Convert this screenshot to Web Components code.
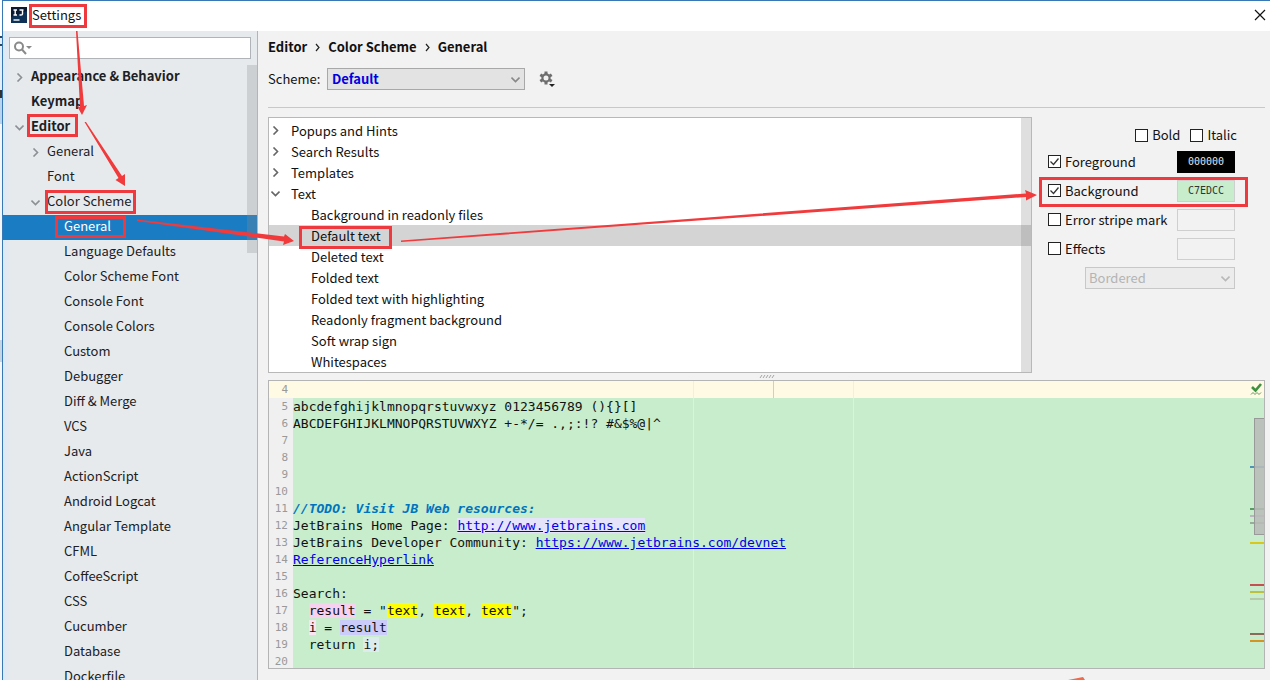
<!DOCTYPE html>
<html lang="en">
<head>
<meta charset="utf-8">
<title>Settings</title>
<style>
  html, body { height: 100%; }
  body {
    margin: 0;
    overflow: hidden;
    background: #f2f2f2;
    color: #111;
    font: 13px/20px "Noto Sans CJK SC", "Noto Sans", sans-serif;
  }
  .attributes { display: flex; gap: 8px; }
</style>
</head>
<body>
<settings-window>
  <title-bar slot="title">Settings</title-bar>
  <side-panel slot="side">
    <tree-row state="closed" strong>Appearance &amp; Behavior</tree-row>
    <tree-row strong>Keymap</tree-row>
    <tree-row state="open" strong>Editor</tree-row>
    <tree-row level="1" state="closed">General</tree-row>
    <tree-row level="1">Font</tree-row>
    <tree-row level="1" state="open">Color Scheme</tree-row>
    <tree-row level="2" selected>General</tree-row>
    <tree-row level="2">Language Defaults</tree-row>
    <tree-row level="2">Color Scheme Font</tree-row>
    <tree-row level="2">Console Font</tree-row>
    <tree-row level="2">Console Colors</tree-row>
    <tree-row level="2">Custom</tree-row>
    <tree-row level="2">Debugger</tree-row>
    <tree-row level="2">Diff &amp; Merge</tree-row>
    <tree-row level="2">VCS</tree-row>
    <tree-row level="2">Java</tree-row>
    <tree-row level="2">ActionScript</tree-row>
    <tree-row level="2">Android Logcat</tree-row>
    <tree-row level="2">Angular Template</tree-row>
    <tree-row level="2">CFML</tree-row>
    <tree-row level="2">CoffeeScript</tree-row>
    <tree-row level="2">CSS</tree-row>
    <tree-row level="2">Cucumber</tree-row>
    <tree-row level="2">Database</tree-row>
    <tree-row level="2">Dockerfile</tree-row>
  </side-panel>
  <scheme-header></scheme-header>
  <div class="attributes">
    <option-list>
      <option-row state="closed">Popups and Hints</option-row>
      <option-row state="closed">Search Results</option-row>
      <option-row state="closed">Templates</option-row>
      <option-row state="open">Text</option-row>
      <option-row nested>Background in readonly files</option-row>
      <option-row nested selected>Default text</option-row>
      <option-row nested>Deleted text</option-row>
      <option-row nested>Folded text</option-row>
      <option-row nested>Folded text with highlighting</option-row>
      <option-row nested>Readonly fragment background</option-row>
      <option-row nested>Soft wrap sign</option-row>
      <option-row nested>Whitespaces</option-row>
    </option-list>
    <attribute-panel></attribute-panel>
  </div>
  <split-grip></split-grip>
  <code-preview></code-preview>
  <callout-layer slot="overlay"></callout-layer>
</settings-window>

<script>
const chevron = (dir, size = 9) => `
  <svg width="${size}" height="${size}" viewBox="0 0 9 9" fill="none" stroke="currentColor" stroke-width="1.6" aria-hidden="true">
    <path d="${dir === 'open' ? 'M0.5 2.5 L4.5 6.5 L8.5 2.5' : 'M2.5 0.5 L6.5 4.5 L2.5 8.5'}"/>
  </svg>`;

function define(name, render) {
  customElements.define(name, class extends HTMLElement {
    connectedCallback() {
      this.attachShadow({ mode: 'open' });
      this.shadowRoot.innerHTML = render(this);
    }
  });
}

define('settings-window', () => `
  <style>
    :host {
      display: grid;
      grid-template-columns: 2px 256px minmax(0, 1fr);
      grid-template-rows: 31px minmax(0, 1fr);
      height: 100vh;
      position: relative;
      overflow: hidden;
    }
    .edge {
      grid-row: 1 / 3;
      background: linear-gradient(#fff 36px, #29485f 36px 38px, #e4eef8 38px 44px, #29485f 44px 46px, #e4eef8 46px 90px, #333 90px 98px, #b9d4ee 98px 124px, #f4f6f8 124px 340px, #c5d5e4 340px 362px, #f4f6f8 362px);
    }
    .side { border-right: 1px solid #b4b4b4; border-left: 1px solid #3878b4; overflow: hidden; }
    .title { grid-column: 2 / 4; border-left: 1px solid #3878b4; border-top: 1px solid #3878b4; background: #fff; }
    main {
      display: flex;
      flex-direction: column;
      min-height: 0;
      padding: 0 5px 11px 10px;
    }
  </style>
  <div class="edge"></div>
  <div class="title"><slot name="title"></slot></div>
  <div class="side"><slot name="side"></slot></div>
  <main><slot></slot></main>
  <slot name="overlay"></slot>
`);

define('title-bar', () => `
  <style>
    :host { display: flex; align-items: center; height: 28px; padding: 0 4px 0 8px; }
    h1 { flex: 1; margin: 0 0 0 5px; font: inherit; }
    svg { display: block; }
    button { padding: 0; border: 0; background: none; width: 12px; height: 12px; color: #111; }
  </style>
  <svg width="16" height="16" viewBox="0 0 16 16" aria-hidden="true">
    <rect width="16" height="16" fill="#0b1a33"/>
    <path d="M0 10 L16 4 V16 H0Z" fill="#0d3157"/>
    <path d="M2.5 3 H6 M4.2 3 V8 M2.5 8 H6 M8.5 3 H12.5 M11.5 3 V7 Q11.5 8 10 8 H8.5" stroke="#fff" stroke-width="1.4" fill="none"/>
    <path d="M2.5 13 H8.5" stroke="#fff" stroke-width="1.4"/>
  </svg>
  <h1><slot></slot></h1>
  <button aria-label="Close">
    <svg width="12" height="12" viewBox="0 0 12 12" stroke="currentColor" stroke-width="1.2"><path d="M1 1 L11 11 M11 1 L1 11"/></svg>
  </button>
`);

define('side-panel', () => `
  <style>
    :host { display: block; height: 100%; background: linear-gradient(90deg, #dce9f6, #e6eaed 8px); overflow: hidden; }
    .search {
      display: flex;
      align-items: center;
      gap: 2px;
      height: 20px;
      margin: 6px;
      padding-left: 4px;
      border: 1px solid #b0b4b8;
      background: #fff;
    }
    input { flex: 1; min-width: 0; height: 18px; padding: 0; border: 0; outline: 0; background: none; font: inherit; }
    .body { position: relative; }
    .thumb { position: absolute; top: 0; right: 0; width: 10px; height: 188px; background: rgba(140, 140, 140, .28); }
  </style>
  <label class="search">
    <svg width="20" height="16" viewBox="0 0 20 16" fill="none" stroke="#8a8a8a" stroke-width="2" aria-label="Search">
      <circle cx="5" cy="6.5" r="4"/><path d="M8 9.5 L12 14"/><path d="M12 6 H18 L15 9Z" fill="#8a8a8a" stroke="none"/>
    </svg>
    <input type="text" aria-label="Search settings">
  </label>
  <div class="body" role="tree"><slot></slot><div class="thumb"></div></div>
`);

define('tree-row', el => `
  <style>
    :host { display: flex; align-items: center; height: 25px; padding-left: 12px; color: #1c2024; }
    :host([level="1"]) { padding-left: 28px; }
    :host([level="2"]) { padding-left: 45px; }
    :host([selected]) { background: #1a7dc4; color: #fff; }
    :host([strong]) { font-weight: bold; }
    i { display: flex; width: 16px; color: #8c9094; }
    span { padding-bottom: 3px; }
  </style>
  <i>${el.hasAttribute('state') ? chevron(el.getAttribute('state')) : ''}</i>
  <span role="treeitem"><slot></slot></span>
`);

define('scheme-header', () => `
  <style>
    :host { display: block; border-bottom: 1px solid #c8c8c8; margin-bottom: 9px; height: 76px; }
    nav { display: flex; gap: 8px; align-items: center; height: 32px; font-weight: bold; color: #111; }
    .line { display: flex; align-items: center; height: 32px; }
    label { width: 59px; }
    .combo { display: grid; align-items: center; width: 198px; }
    .combo > * { grid-area: 1 / 1; }
    select {
      appearance: none;
      height: 22px;
      padding: 0 4px;
      border: 1px solid #a8a8a8;
      border-radius: 0;
      background: #e3e3e3;
      color: #0000e0;
      font: inherit;
      font-weight: bold;
    }
    .combo svg { justify-self: end; margin-right: 5px; color: #888; pointer-events: none; }
    button { margin-left: 13px; padding: 0; border: 0; background: none; height: 18px; }
  </style>
  <nav aria-label="Breadcrumb">
    <span>Editor</span><svg width="5" height="9" viewBox="0 0 5 9" fill="none" stroke="#222" stroke-width="1.2"><path d="M1 1 L4 4.5 L1 8"/></svg>
    <span>Color Scheme</span><svg width="5" height="9" viewBox="0 0 5 9" fill="none" stroke="#222" stroke-width="1.2"><path d="M1 1 L4 4.5 L1 8"/></svg>
    <span>General</span>
  </nav>
  <div class="line">
    <label for="scheme">Scheme:</label>
    <div class="combo">
      <select id="scheme"><option>Default</option></select>
      ${chevron('open')}
    </div>
    <button aria-label="Scheme actions">
      <svg width="18" height="18" viewBox="0 0 18 18">
        <g transform="translate(8 8)" fill="none" stroke="#6e6e6e">
          <circle r="3.6" stroke-width="2.2"/>
          <path d="M0 -6.5 V-4 M0 4 V6.5 M-5.7 -3.3 L-3.6 -2 M5.7 -3.3 L3.6 -2 M-5.7 3.3 L-3.6 2 M5.7 3.3 L3.6 2" stroke-width="3"/>
        </g>
        <path d="M11 14 H17 L14 17Z" fill="#222"/>
      </svg>
    </button>
  </div>
`);

define('option-list', () => `
  <style>
    :host { display: flex; flex: 1; min-width: 0; border: 1px solid #b8b8b8; background: #fff; height: 254px; overflow: hidden; }
    .rows { flex: 1; padding-top: 2px; margin-right: -10px; }
    .track { width: 10px; background: rgba(120, 120, 120, .24); }
  </style>
  <div class="rows" role="tree"><slot></slot></div>
  <div class="track"></div>
`);

define('option-row', el => `
  <style>
    :host { display: flex; align-items: center; height: 21px; padding-left: 2px; margin-top: 0; }
    :host([nested]) { padding-left: 22px; }
    :host([selected]) { background: #d4d4d4; }
    i { display: flex; width: 20px; color: #666; }
  </style>
  <i>${el.hasAttribute('state') ? chevron(el.getAttribute('state')) : ''}</i>
  <span role="treeitem"><slot></slot></span>
`);

define('attribute-panel', () => `
  <style>
    :host { display: flex; flex-direction: column; width: 187px; padding: 6px 30px 0 8px; }
    .styles { display: flex; justify-content: flex-end; gap: 10px; height: 24px; margin-right: -2px; }
    .row { display: flex; align-items: center; justify-content: space-between; height: 29px; }
    label { display: flex; align-items: center; gap: 4px; white-space: nowrap; }
    input[type="checkbox"] {
      appearance: none;
      width: 13px;
      height: 13px;
      margin: 0;
      border: 1px solid #222;
      background: #fff;
    }
    input:checked {
      background: #fff url('data:image/svg+xml,<svg xmlns="http://www.w3.org/2000/svg" viewBox="0 0 11 11"><path d="M1.5 5.5 L4.5 8.5 L9.5 2.5" fill="none" stroke="%23333" stroke-width="1.3"/></svg>');
    }
    .color {
      box-sizing: border-box;
      width: 58px;
      height: 22px;
      padding: 0;
      border: 1px solid #cfcfcf;
      background: #f2f2f2;
      text-align: center;
      font: 10px "DejaVu Sans Mono", monospace;
    }
    .fg { background: #000; color: #e4e4e4; border-color: #000; }
    .bg { background: #c7edcc; color: #333; }
    .combo { display: grid; align-items: center; width: 150px; margin: 4px 0 0 auto; }
    .combo > * { grid-area: 1 / 1; }
    select {
      appearance: none;
      height: 22px;
      padding: 0 3px;
      border: 1px solid #c8c8c8;
      border-radius: 0;
      background: #ececec;
      color: #b4b4b4;
      opacity: 1;
      font: inherit;
    }
    .combo svg { justify-self: end; margin-right: 5px; color: #b8b8b8; }
  </style>
  <div class="styles">
    <label><input type="checkbox">Bold</label>
    <label><input type="checkbox">Italic</label>
  </div>
  <div class="row"><label><input type="checkbox" checked>Foreground</label><input class="color fg" aria-label="Foreground color" value="000000"></div>
  <div class="row"><label><input type="checkbox" checked>Background</label><input class="color bg" aria-label="Background color" value="C7EDCC"></div>
  <div class="row"><label><input type="checkbox">Error stripe mark</label><input class="color" aria-label="Error stripe color"></div>
  <div class="row"><label><input type="checkbox">Effects</label><input class="color" aria-label="Effects color"></div>
  <div class="combo"><select disabled aria-label="Effect type"><option>Bordered</option></select>${chevron('open')}</div>
`);

define('split-grip', () => `
  <style>
    :host { display: flex; justify-content: center; align-items: center; height: 7px; }
  </style>
  <svg width="16" height="5" stroke="#a4a4a4" stroke-width="1"><path d="M1 4 L3 1 M4 4 L6 1 M7 4 L9 1 M10 4 L12 1 M13 4 L15 1"/></svg>
`);

const codeLines = [
  '',
  'abcdefghijklmnopqrstuvwxyz 0123456789 (){}[]',
  'ABCDEFGHIJKLMNOPQRSTUVWXYZ +-*/= .,;:!? #&amp;$%@|^',
  '', '', '', '',
  '<b>//TODO: Visit JB Web resources:</b>',
  'JetBrains Home Page: <a class="lit" href="http://www.jetbrains.com">http://www.jetbrains.com</a>',
  'JetBrains Developer Community: <a href="https://www.jetbrains.com/devnet">https://www.jetbrains.com/devnet</a>',
  '<a href="#">ReferenceHyperlink</a>',
  '',
  'Search:',
  '  <span class="write">result</span> = "<mark>text</mark>, <mark>text</mark>, <mark>text</mark>";',
  '  <span class="pale">i</span> = <span class="read">result</span>',
  '  return <span class="soft">i;</span>',
  ''
];

// [y, color] of each stripe, measured from the top of the editor
const stripes = [
  [86, '#4f93b8'], [128, '#5b9a64'], [135, '#b9b4c0'], [142, '#98ac9c'], [162, '#d8c81c'],
  [204, '#c65050'], [211, '#bcc040'], [218, '#b4cbaa'], [253, '#8a6a58'], [260, '#d49424']
];

define('code-preview', () => `
  <style>
    :host {
      display: flex;
      flex: 1;
      min-height: 0;
      border: 1px solid #b4b4b4;
      background: #c7edcc;
      overflow: hidden;
      font: 13px/17px "DejaVu Sans Mono", "Liberation Mono", monospace;
    }
    .lines { flex: 1; min-width: 0; }
    .line { display: flex; height: 17px; }
    .no { width: 19px; padding-right: 5px; background: #f0f0f0; color: #999; text-align: right; font-size: 11px; }
    pre {
      flex: 1;
      margin: 0;
      font: inherit;
      background: linear-gradient(90deg, transparent 400px, #dff0e2 400px 401px, transparent 401px 560px, #dff0e2 560px 561px, transparent 561px);
    }
    .line:first-child, .line:first-child .no { background: #fffae3; }
    .line:first-child pre { background: linear-gradient(90deg, transparent 400px, #f4efdc 400px 401px, transparent 401px 480px, #d2cfc0 480px 481px, transparent 481px 560px, #f4efdc 560px 561px, transparent 561px); }
    b { color: #0073bf; font-style: italic; }
    a { color: #0000e6; }
    .lit { background: #e6e4fa; }
    mark { background: #ff0; color: inherit; }
    .write { background: #f8d0f0; }
    .pale { background: #fae4f4; }
    .read { background: #ccccfa; }
    .soft { background: #dcecec; }
    .stripe { display: block; width: 14px; background: linear-gradient(#fffae3 17px, transparent 17px); }
  </style>
  <div class="lines">
    ${codeLines.map((line, i) => `<div class="line"><span class="no">${i + 4}</span><pre>${line}</pre></div>`).join('')}
  </div>
  <svg class="stripe" width="14" height="287" aria-hidden="true">
    ${stripes.map(([y, color]) => `<rect x="0" y="${y - 1}" width="14" height="2" fill="${color}"/>`).join('')}
    <rect x="4.5" y="37.5" width="10" height="116" fill="#b8bcb8" fill-opacity=".88" stroke="#999"/>
    <path d="M2 6 L5.5 9.5 L11 3" fill="none" stroke="#3f9142" stroke-width="2.6"/>
    <path d="M1 13.5 L3 11.5 L5 13.5 L7 11.5 L9 13.5 L11 11.5" fill="none" stroke="#5a9a5c" stroke-width="1"/>
  </svg>
`);

define('callout-layer', () => `
  <style>
    :host { position: absolute; inset: 0; pointer-events: none; }
    svg { display: block; }
  </style>
  <svg width="100%" height="100%" aria-hidden="true">
    <g fill="none" stroke="#ee3a3e" stroke-width="3">
      <rect x="30.5" y="5.5" width="55" height="21"/>
      <rect x="28.5" y="115.5" width="48" height="20"/>
      <rect x="46.5" y="191.5" width="88" height="21"/>
      <rect x="56.5" y="217.5" width="68" height="19"/>
      <rect x="300.5" y="227.5" width="90" height="20"/>
      <rect x="1040.5" y="178.5" width="206" height="27"/>
    </g>
    <g fill="#f03a3c">
      <path d="M76 31 L77.5 31 L84 106 L87 105 L82 115 L77 106 L80 107Z"/>
      <path d="M84.5 122 L86 122 L122 176 L125 174 L125 186 L115.5 180 L118.5 178Z"/>
      <path d="M137 219.5 L284 236.5 L285 234 L294 241 L283 245 L284 241.5 L137 221Z"/>
      <path d="M401 240.5 L1026 193.5 L1025 190 L1037 195 L1026 200.5 L1026 197 L401 242Z"/>
      <path d="M1068 680 L1083 677 L1085 680Z" fill="#f06a4c"/>
    </g>
  </svg>
`);
</script>
</body>
</html>
